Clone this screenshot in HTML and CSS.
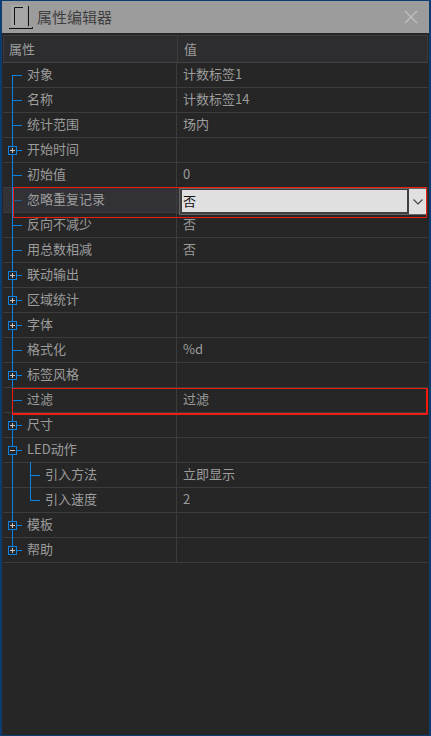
FILE: index.html
```html
<!DOCTYPE html>
<html lang="zh-CN">
<head>
  <meta charset="UTF-8">
  <title>属性编辑器</title>
  <link rel="stylesheet" href="styles.css">
</head>
<body>
  <div class="window">
    <div class="titlebar">
      <svg class="app-icon" width="26" height="26" viewBox="0 0 26 26">
        <rect x="3" y="1" width="16" height="22" fill="#a6a6a6"/>
        <path d="M6.5 21V3.5H15M20.5 2V22M1 24.5H24.5V23" fill="none" stroke="#111" stroke-width="1"/>
      </svg>
      <div class="title">属性编辑器</div>
      <svg class="close" width="14" height="14" viewBox="0 0 14 14">
        <path d="M1 1L13 13M13 1L1 13" stroke="#c0c0c0" stroke-width="1.2"/>
      </svg>
    </div>

    <div class="grid">
      <div class="row head"><div class="name">属性</div><div class="value">值</div></div>

      <div class="row first"><div class="name">对象</div><div class="value">计数标签1</div></div>
      <div class="row"><div class="name">名称</div><div class="value">计数标签14</div></div>
      <div class="row"><div class="name">统计范围</div><div class="value">场内</div></div>
      <div class="row"><span class="box plus"></span><div class="name">开始时间</div><div class="value"></div></div>
      <div class="row"><div class="name">初始值</div><div class="value">0</div></div>
      <div class="row active">
        <div class="name">忽略重复记录</div>
        <div class="value">
          <div class="combo">
            <div class="combo-text">否</div>
            <div class="combo-btn">
              <svg width="10" height="6" viewBox="0 0 10 6"><path d="M0.5 0.5L5 5L9.5 0.5" fill="none" stroke="#444" stroke-width="1.2"/></svg>
            </div>
          </div>
        </div>
        <div class="red-box tall"></div>
      </div>
      <div class="row"><div class="name">反向不减少</div><div class="value">否</div></div>
      <div class="row"><div class="name">用总数相减</div><div class="value">否</div></div>
      <div class="row"><span class="box plus"></span><div class="name">联动输出</div><div class="value"></div></div>
      <div class="row"><span class="box plus"></span><div class="name">区域统计</div><div class="value"></div></div>
      <div class="row"><span class="box plus"></span><div class="name">字体</div><div class="value"></div></div>
      <div class="row"><div class="name">格式化</div><div class="value">%d</div></div>
      <div class="row"><span class="box plus"></span><div class="name">标签风格</div><div class="value"></div></div>
      <div class="row">
        <div class="name">过滤</div><div class="value">过滤</div>
        <div class="red-box"></div>
      </div>
      <div class="row"><span class="box plus"></span><div class="name">尺寸</div><div class="value"></div></div>
      <div class="row"><span class="box minus"></span><div class="name">LED动作</div><div class="value"></div></div>
      <div class="row child child-first"><div class="name">引入方法</div><div class="value">立即显示</div></div>
      <div class="row child child-last"><div class="name">引入速度</div><div class="value">2</div></div>
      <div class="row"><span class="box plus"></span><div class="name">模板</div><div class="value"></div></div>
      <div class="row last"><span class="box plus"></span><div class="name">帮助</div><div class="value"></div></div>
    </div>
  </div>
</body>
</html>
```

FILE: styles.css
```css
html, body {
  margin: 0;
  height: 100%;
}

body {
  background-color: #262626;
  font-family: "Noto Sans CJK SC", "Noto Sans", sans-serif;
  font-size: 13px;
  color: #9c9c9c;
  overflow: hidden;
}

.window {
  height: 100%;
  box-sizing: border-box;
  border: 1px solid #0b3d73;
  border-left-width: 2px;
  border-right-width: 2px;
  background-color: #262626;
}

.titlebar {
  height: 32px;
  display: flex;
  align-items: center;
  background-color: #9c9c9c;
  padding: 0 11px 0 6px;
}

.app-icon {
  flex: none;
}

.title {
  flex: 1;
  margin-left: 3px;
  padding-bottom: 2px;
  font-size: 15px;
  color: #3f3f3f;
}

.grid {
  margin: 2px 1px 0 1px;
  border-top: 1px solid #3c3c3c;
}

.row {
  position: relative;
  display: grid;
  grid-template-columns: 174px 1fr;
  height: 25px;
  box-sizing: border-box;
  border-bottom: 1px solid #3c3c3c;
  line-height: 22px;
}

.name {
  padding-left: 24px;
  border-right: 1px solid #3c3c3c;
}

.value {
  padding-left: 6px;
}

.head {
  height: 27px;
  line-height: 26px;
  background-color: #2d2d2f;
  border-left: 1px solid #3c3c3c;
  border-right: 1px solid #3c3c3c;
  border-bottom-color: #444;
}

.head .name {
  padding-left: 5px;
}

/* tree lines */
.row:not(.head)::before {
  content: "";
  position: absolute;
  left: 9px;
  top: -1px;
  bottom: -1px;
  border-left: 1px solid #0a80e0;
}

.row:not(.head)::after {
  content: "";
  position: absolute;
  left: 9px;
  top: 12px;
  width: 10px;
  border-top: 1px solid #0a80e0;
}

.row.first::before {
  top: 12px;
}

.row.last::before {
  bottom: 11px;
}

.row.active::after {
  border-top-color: #24608f;
}

.child .name {
  padding-left: 42px;
}

.row.child::after {
  left: 27px;
}

.child .name::before {
  content: "";
  position: absolute;
  left: 27px;
  top: -1px;
  height: 14px;
  border-left: 1px solid #0a80e0;
}

.child-first .name::before {
  height: 26px;
}

.box {
  position: absolute;
  z-index: 1;
  left: 5px;
  top: 8px;
  width: 7px;
  height: 7px;
  border: 1px solid #0a80e0;
  background-color: #262626;
  background-image: linear-gradient(#c8c8c8, #c8c8c8);
  background-size: 5px 1px;
  background-position: center;
  background-repeat: no-repeat;
}

.plus {
  background-image: linear-gradient(#c8c8c8, #c8c8c8), linear-gradient(#c8c8c8, #c8c8c8);
  background-size: 5px 1px, 1px 5px;
}

.active {
  background-color: #323236;
}

.active .value {
  padding-left: 0;
}

.combo {
  display: flex;
  height: 25px;
  margin: 0 1px 0 2px;
  background-color: #3f3f3f;
  border: 1px solid #666;
  border-width: 1px 0 1px 1px;
  color: #111;
}

.combo-text {
  flex: 1;
  height: 22px;
  margin: 1px 2px 0 2px;
  line-height: 21px;
  background-color: #e0e0e0;
  padding-left: 1px;
}

.combo-btn {
  width: 18px;
  display: flex;
  align-items: center;
  justify-content: center;
  background-color: #e0e0e0;
}

.red-box {
  position: absolute;
  z-index: 2;
  left: 9px;
  right: 0;
  top: 0;
  height: 27px;
  box-sizing: border-box;
  border: 2px solid #f01c12;
  border-width: 1px 2px 2px 1px;
  border-radius: 1px;
}

.red-box.tall {
  top: -1px;
  left: 10px;
  right: 1px;
  height: 31px;
  border-width: 1px;
}
```
